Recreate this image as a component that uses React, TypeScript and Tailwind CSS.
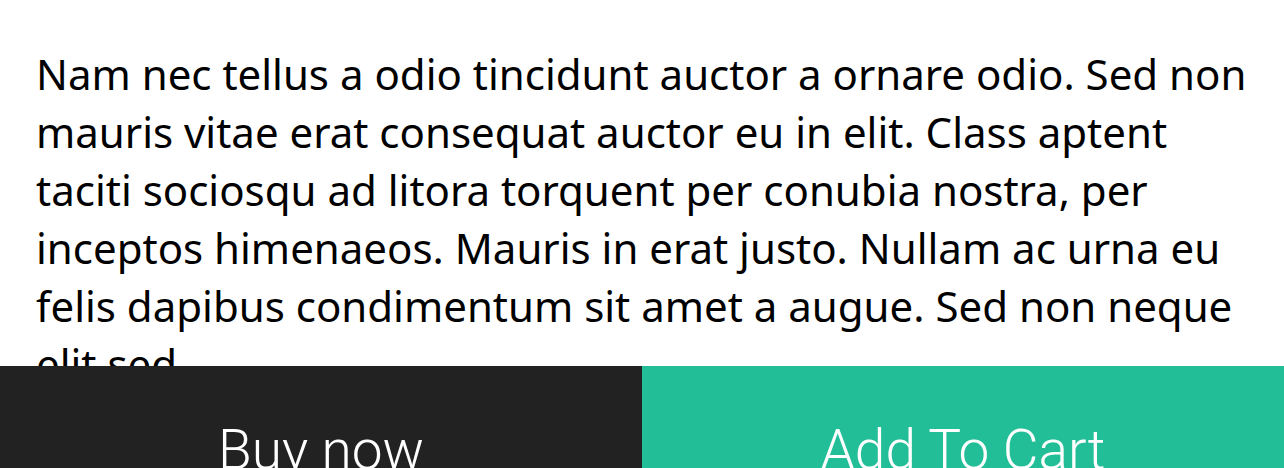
export default function App() {
  return (
    <div className="w-[1284px] h-[468px] overflow-hidden bg-white flex flex-col">
      <div className="h-[366px] shrink-0 overflow-hidden px-[36px] pt-[45px]">
        <p
          className="text-[42px] leading-[58px] text-black"
          style={{ fontFamily: '"Noto Sans", sans-serif' }}
        >
          Nam nec tellus a odio tincidunt auctor a ornare odio. Sed non mauris vitae erat consequat auctor eu in elit. Class aptent taciti sociosqu ad litora torquent per conubia nostra, per inceptos himenaeos. Mauris in erat justo. Nullam ac urna eu felis dapibus condimentum sit amet a augue. Sed non neque elit sed.
        </p>
      </div>
      <div className="flex shrink-0 h-[160px]">
        <div
          className="w-1/2 bg-[#222222] text-white flex justify-center pt-[51px] text-[55px] leading-[66px] font-light"
          style={{ fontFamily: 'Roboto, sans-serif' }}
        >
          Buy now
        </div>
        <div
          className="w-1/2 bg-[#22be98] text-white flex justify-center pt-[51px] text-[55px] leading-[66px] font-light"
          style={{ fontFamily: 'Roboto, sans-serif' }}
        >
          Add To Cart
        </div>
      </div>
    </div>
  );
}
